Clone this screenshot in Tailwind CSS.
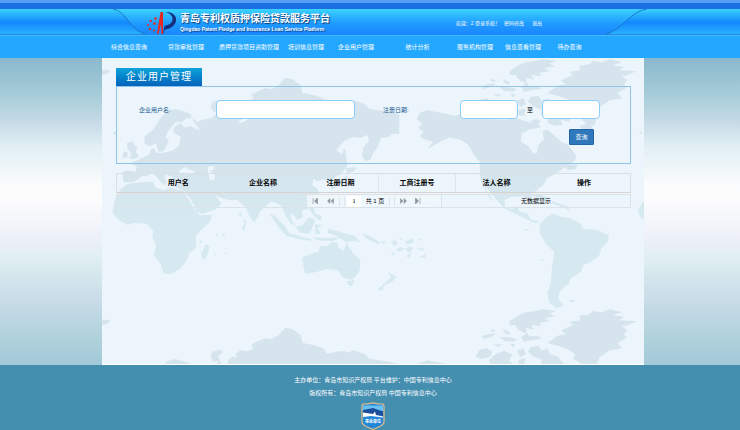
<!DOCTYPE html>
<html lang="zh-CN">
  <head>
    <title>青岛专利权质押保险贷款服务平台</title>
    <meta charset="utf-8" />
    <meta name="viewport" content="width=device-width, initial-scale=1" />
    <script src="https://cdn.jsdelivr.net/npm/@tailwindcss/browser@4"></script>
  </head>
  <body
    class="min-h-screen flex flex-col bg-[#448eb0] font-['Liberation_Sans','Noto_Sans_CJK_SC',sans-serif] text-[6px] leading-[8px]"
  >
    <!-- banner -->
    <header
      class="relative h-9 border-t-3 border-[#559ff8] bg-[#1b6fe0]"
    >
      <svg
        class="absolute inset-x-0 top-[6px] w-full h-[27px]"
        viewBox="0 0 740 27"
        preserveAspectRatio="none"
        aria-hidden="true"
      >
        <defs>
          <linearGradient id="side" x1="0" y1="0" x2="0" y2="1">
            <stop offset="0" stop-color="#3ad0fd" />
            <stop offset="0.5" stop-color="#1389fe" />
            <stop offset="1" stop-color="#2bb6ff" />
          </linearGradient>
          <linearGradient id="mid" x1="0" y1="0" x2="0" y2="1">
            <stop offset="0" stop-color="#3bd3ff" />
            <stop offset="0.55" stop-color="#1f9bff" />
            <stop offset="1" stop-color="#1a86ff" />
          </linearGradient>
        </defs>
        <rect width="740" height="27" fill="url(#side)" />
        <path
          d="M113 0C127 2 129 22 148 26H604C624 20 630 2 647 0Z"
          fill="url(#mid)"
        />
        <path
          d="M113 0C127 2 129 22 148 26M604 26C624 20 630 2 647 0"
          fill="none"
          stroke="#1669b8"
          stroke-width="0.8"
        />
        <path d="M0 25.500H148M604 25.500H740" stroke="#1f8be0" />
        <path d="M0 26.500H740" stroke="#43b7ff" />
      </svg>
      <div
        class="relative h-full pl-[146px] pr-[198px] pt-[6px] flex items-center justify-between text-white"
      >
        <a href="#" class="flex items-center gap-1">
          <svg class="w-[30px] h-6" viewBox="0 0 30 24" aria-hidden="true">
            <path d="M14.500 1L17 1 17 23 15.500 23 15 13 12.500 23 11 23Z" fill="#e8281e" />
            <path
              d="M20 1C29 1 33 8 28 14C25 18 20 18 18.500 19L18 22 17 23 18.500 15C23 14 27 12 26.500 7C26 4 23 2 20 1Z"
              fill="#14307e"
            />
            <g fill="#e8281e">
              <circle cx="9.500" cy="7.500" r="1.300" />
              <circle cx="4.500" cy="10" r="1.200" />
              <circle cx="2" cy="14" r="1" />
              <circle cx="8.500" cy="12.500" r="1.300" />
              <circle cx="4" cy="18" r="1.200" />
              <circle cx="8" cy="19.500" r="1" />
            </g>
          </svg>
          <span class="flex flex-col text-shadow-[1px_1px_1px_#0b3c78]">
            <span class="text-[10px] leading-[12px] font-bold whitespace-nowrap">青岛专利权质押保险贷款服务平台</span>
            <span class="text-[5px] leading-[8px] font-bold whitespace-nowrap">Qingdao Patent Pledge and Insurance Loan Service Platform</span>
          </span>
        </a>
        <div class="flex gap-1 text-[5px] whitespace-nowrap">
          <span>欢迎：2 登录系统！</span>
          <a href="#" class="mr-1">密码修改</a>
          <a href="#">退出</a>
        </div>
      </div>
    </header>

    <nav class="h-[22px] pl-[100px] pr-[148px] bg-[#24a8ff] text-white">
      <ul
        class="h-full grid grid-cols-[58fr_56fr_70fr_44fr_56fr_67fr_48fr_48fr_45fr] items-center text-center whitespace-nowrap"
      >
        <li><a href="#">综合信息查询</a></li>
        <li><a href="#">贷款审批管理</a></li>
        <li><a href="#">质押贷款项目资助管理</a></li>
        <li><a href="#">培训信息管理</a></li>
        <li><a href="#">企业用户管理</a></li>
        <li><a href="#">统计分析</a></li>
        <li><a href="#">服务机构管理</a></li>
        <li><a href="#">信息查看管理</a></li>
        <li><a href="#">待办查询</a></li>
      </ul>
    </nav>

    <div
      class="grow pl-[102px] pr-[96px] flex flex-col bg-[linear-gradient(#8ab8cd_0%,#a6ccd8_12%,#c6dbe7_21%,#e2eff4_29%,#fafbfc_41%,#fcfcfd_46%,#ebeff7_60%,#dfeff1_65%,#c8dce8_79%,#b0d2db_91%,#a2c9d9_100%)]"
    >
      <main class="relative grow pl-[14px] pr-[13px] pt-[10px] bg-[#ecf5fc] border-b border-white">
        <!-- world map, tiled downwards -->
        <svg
          class="absolute inset-0 w-full h-full"
          viewBox="0 0 542 307"
          preserveAspectRatio="xMidYMin slice"
          aria-hidden="true"
        >
          <defs>
            <linearGradient id="land" gradientUnits="userSpaceOnUse" x1="0" y1="0" x2="0" y2="750">
              <stop offset="0.45" stop-color="#d5e4ed" />
              <stop offset="0.65" stop-color="#d6e9f0" />
            </linearGradient>
          </defs>
          <g transform="translate(0 -1) scale(0.3457 0.3333)">
            <g id="world" fill="url(#land)">
              <!-- Europe and Asia -->
              <path
                d="M62 375L58 345 72 340 96 344 101 328 83 318 118 302 137 292 143 276 152 274 155 287 175 288 203 281 222 268 228 240 205 226 209 210 228 198 240 212 256 206 272 216 284 218 265 196 262 184 276 195 290 188 318 182 342 160 346 178 362 172 366 158 380 148 392 152 405 136 438 126 432 112 470 94 490 96 512 84 530 62 550 66 575 85 580 108 612 114 640 124 650 140 690 132 715 136 728 130 758 140 775 156 820 162 860 172 860 230 838 232 830 240 806 244 798 270 786 286 776 308 762 312 752 296 756 272 772 252 768 234 748 242 725 240 700 252 678 280 690 288 706 296 710 325 692 352 672 362 676 392 664 398 658 380 642 366 622 374 612 364 608 384 626 398 626 418 612 440 598 455 576 462 582 480 564 490 556 476 545 468 548 486 560 508 546 500 530 474 520 448 504 438 488 434 470 452 458 462 452 480 440 496 426 478 416 452 404 442 392 428 366 430 338 420 326 412 346 440 326 458 290 470 276 466 258 428 240 404 210 388 222 378 200 360 184 350 180 362 190 376 178 384 160 362 150 352 138 350 132 358 116 356 104 368 88 376Z"
              />
              <!-- Scandinavia -->
              <path
                d="M124 262L122 240 148 218 170 182 190 162 212 156 240 164 258 172 258 186 244 184 232 196 212 196 192 222 184 240 194 252 178 282 164 284 156 258 140 268Z"
              />
              <!-- Britain and Ireland -->
              <path d="M72 258L90 252 92 264 102 266 98 284 108 300 90 306 78 304 86 290 74 276Z" />
              <path d="M62 284L74 284 74 300 58 304Z" />
              <!-- Africa -->
              <path
                d="M52 398L74 380 120 376 148 374 152 390 178 400 200 392 236 402 248 424 262 448 282 474 318 474 312 496 290 516 272 538 272 572 252 590 246 610 226 636 200 650 178 650 170 622 150 594 156 564 146 540 148 522 130 500 92 498 74 504 48 488 30 466 36 432Z"
              />
              <path d="M300 562L312 566 304 600 292 608 286 590Z" />
              <path d="M280 548L290 552 286 560ZM328 532L338 528 334 538ZM346 532L358 530 352 538ZM322 592L330 590 326 596ZM352 588L364 588 358 592Z" />
              <!-- Indian Ocean islands -->
              <path d="M392 470L406 466 402 480ZM406 484L418 492 412 522 404 514 412 500Z" />
              <!-- Arctic islands -->
              <path
                d="M320 134L344 128 350 136 336 148 342 162 322 164 314 150ZM386 140L400 130 414 132 406 148 412 160 396 166ZM430 140L444 136 450 160 442 164Z"
              />
              <path d="M0 40L20 38 24 44 6 54 0 52ZM34 226L40 222 40 234 32 232Z" />
              <!-- Japan and Sakhalin -->
              <path d="M696 278L704 276 708 330 700 334ZM704 334L738 330 728 344 710 348ZM712 350L706 372 682 386 676 380 698 364Z" />
              <!-- South-east Asia -->
              <path
                d="M484 470L500 476 526 504 544 530 556 532 580 540 606 546 604 552 560 544 534 536 512 512ZM560 510L580 504 600 480 616 488 610 510 598 530 574 528ZM616 502L640 504 624 512 632 530 618 532ZM598 454L612 452 618 470 636 478 632 492 614 478ZM610 540L650 544 690 540 670 552 620 550ZM652 516L670 518 696 528 730 536 748 556 726 552 706 556 682 538 654 528ZM752 528L776 538 806 558 796 560 764 544Z"
              />
              <path
                d="M806 552L820 554 816 564ZM836 556L848 548 856 560 846 566ZM858 540L872 546 862 548ZM876 554L896 544 904 556 884 562ZM912 546L924 546 918 552ZM850 578L862 570 878 574 858 584ZM878 576L890 568 900 574 888 588ZM908 574L930 574 930 582ZM880 598L896 586 888 604ZM918 600L936 592 934 602ZM834 584L846 588 844 596Z"
              />
              <!-- Australia and New Zealand -->
              <path
                d="M578 602L596 594 626 584 632 566 652 568 664 556 682 558 684 572 700 582 706 554 716 572 728 590 748 612 744 646 724 668 698 662 682 640 650 636 618 646 588 650 584 634ZM708 672L732 670 722 688 712 684Z"
              />
              <path d="M826 642L836 652 854 658 838 676 820 682 806 702 798 696 820 676 836 662ZM804 690L818 696 804 702Z" />
              <!-- North America -->
              <path
                d="M910 188L918 168 940 160 984 168 1020 176 1046 170 1082 184 1104 178 1128 186 1166 188 1200 184 1234 196 1262 198 1268 212 1240 216 1214 230 1212 254 1234 268 1248 290 1258 288 1260 268 1278 246 1274 222 1290 218 1310 236 1330 256 1346 262 1372 296 1368 310 1352 324 1376 322 1370 336 1348 340 1340 330 1312 350 1288 362 1276 384 1254 402 1240 416 1248 438 1234 432 1218 418 1182 420 1164 430 1168 452 1188 456 1206 446 1206 462 1232 470 1240 488 1264 492 1256 500 1226 486 1196 470 1166 456 1142 430 1116 396 1104 386 1130 428 1140 440 1122 424 1100 384 1093 356 1093 314 1076 294 1060 264 1036 248 1006 242 988 248 962 264 940 276 958 254 936 248 918 238 930 224 914 212 926 200Z"
              />
              <path d="M930 430L952 436 972 448 966 454 946 444ZM1232 414L1262 410 1296 424 1286 430 1256 420ZM1300 432L1346 448 1354 464 1338 452 1304 440ZM1222 514L1236 518 1226 522ZM1268 606L1280 608 1272 612Z" />
              <!-- South America -->
              <path
                d="M1266 500L1288 480 1304 470 1330 480 1350 482 1382 498 1394 516 1430 518 1466 534 1464 552 1444 576 1438 596 1410 618 1394 622 1386 644 1356 664 1350 680 1336 690 1322 708 1320 724 1336 746 1316 754 1294 738 1288 706 1298 680 1302 632 1308 584 1284 562 1266 528ZM1350 730L1370 728 1356 738Z"
              />
              <!-- Canadian archipelago -->
              <path
                d="M1180 42L1200 28 1224 16 1252 12 1274 6 1314 12 1294 20 1310 28 1280 34 1296 42 1266 48 1270 58 1242 54 1250 68 1226 62 1228 80 1206 70 1196 54 1178 54Z"
              />
              <path
                d="M1098 88L1120 80 1140 80 1126 90 1104 96ZM1122 66L1142 70 1130 76ZM1160 66L1180 76 1176 84 1162 76ZM1150 90L1176 90 1200 96 1190 104 1164 102ZM1212 90L1230 78 1236 88 1262 86 1272 96 1240 100 1220 104ZM1080 150L1092 128 1112 124 1130 134 1122 150 1098 156ZM1118 160L1140 140 1162 132 1188 142 1178 160 1194 176 1160 184 1128 176ZM1200 130L1220 124 1226 142 1210 150ZM1204 160L1224 154 1222 176 1206 176ZM1132 112L1156 112 1146 120ZM1180 110L1196 112 1190 122Z"
              />
              <path
                d="M1240 120L1262 116 1272 130 1290 124 1296 142 1318 148 1336 170 1358 182 1350 194 1326 188 1334 204 1308 206 1288 196 1294 180 1268 172 1272 158 1246 148 1232 134ZM1240 190L1260 186 1270 196 1250 202Z"
              />
              <!-- Greenland and Iceland -->
              <path
                d="M1288 108L1318 86 1342 82 1328 70 1362 54 1352 44 1384 40 1380 26 1410 22 1420 12 1446 16 1470 6 1504 16 1478 24 1510 30 1496 40 1546 42 1514 58 1500 54 1520 70 1510 82 1518 92 1492 108 1504 124 1470 130 1440 150 1430 176 1426 204 1408 208 1390 190 1384 168 1362 156 1368 142 1346 126 1322 118Z"
              />
              <path d="M1380 208L1408 198 1420 216 1396 224ZM1552 226L1562 224 1560 232ZM1568 430L1550 460 1556 480 1568 488Z" />
              <!-- inland seas -->
              <path
                d="M222 342L240 330 252 338 270 342 264 350 228 350ZM304 330L326 326 322 338 312 342 326 352 326 368 312 370 308 348ZM392 194L420 180 430 182 404 198Z"
                fill="#ecf5fc"
              />
            </g>
            <use href="#world" y="750" />
          </g>
        </svg>

        <div class="relative">
          <h1
            class="w-[86px] h-[18px] flex items-center justify-center bg-linear-to-b from-[#10a3da] to-[#0762bb] text-[10px] tracking-widest text-white"
          >
            企业用户管理
          </h1>
          <form class="h-[78px] pt-[13px] pl-[22px] pr-[30px] border border-[#8fc5ea] text-[#1c5f95]">
            <div class="flex items-center">
              <label for="username" class="w-[77px]">企业用户名:</label>
              <input
                id="username"
                type="text"
                class="w-0 grow h-[19px] px-1 rounded-[4px] border border-[#8ccdfa] bg-white"
              />
              <label for="date-from" class="w-[77px] ml-7">注册日期:</label>
              <input
                id="date-from"
                type="text"
                class="w-[58px] h-[19px] px-1 rounded-[4px] border border-[#8ccdfa] bg-white"
              />
              <label for="date-to" class="w-6 text-center text-black">至</label>
              <input
                id="date-to"
                type="text"
                class="w-[58px] h-[19px] px-1 rounded-[4px] border border-[#8ccdfa] bg-white"
              />
            </div>
            <div class="flex justify-end pr-[6px] mt-[10px]">
              <button
                type="submit"
                class="w-[25px] h-4 rounded-[1px] border border-[#2467a8] bg-[#2e78bb] text-white"
              >
                查询
              </button>
            </div>
          </form>

          <table
            class="w-full mt-[9px] table-fixed border-collapse border border-[#d9e0e5] text-[7px] text-black"
          >
            <colgroup>
              <col class="w-[17px]" />
              <col class="w-[90px]" />
              <col class="w-[79px]" />
              <col class="w-[76px]" />
              <col class="w-[77px]" />
              <col class="w-[82px]" />
              <col />
            </colgroup>
            <thead>
              <tr class="h-[19px] border-b border-[#d8d3d3]">
                <td></td>
                <th class="border-r border-[#dde6ec]">用户名</th>
                <th class="border-r border-[#dde6ec]">企业名称</th>
                <th class="border-r border-[#dde6ec]">注册日期</th>
                <th class="border-r border-[#dde6ec]">工商注册号</th>
                <th class="border-r border-[#dde6ec]">法人名称</th>
                <th>操作</th>
              </tr>
            </thead>
          </table>
          <div
            class="mt-px h-[14px] grid grid-cols-[191fr_135px_189fr] items-center border border-[#dbe3e8] text-black"
          >
            <span></span>
            <div class="h-full flex items-center border-r border-[#d9e2e8] bg-[#f1f7fb]/80">
              <button type="button" aria-label="首页" class="w-4 flex justify-center">
                <svg class="w-[6px] h-[6px]" viewBox="0 0 6 6">
                  <path d="M1 0V6M5.500 0L2.500 3 5.500 6Z" fill="#8b959b" stroke="#8b959b" stroke-width="0.7" />
                </svg>
              </button>
              <button type="button" aria-label="上一页" class="w-[15px] flex justify-center">
                <svg class="w-[7px] h-[6px]" viewBox="0 0 7 6">
                  <path d="M3 0.500L0.500 3 3 5.500ZM6.500 0.500L4 3 6.500 5.500Z" fill="#8b959b" stroke="#8b959b" stroke-width="0.500" />
                </svg>
              </button>
              <span class="w-[6px] mx-px h-[9px] border-x border-[#dbe4ea]"></span>
              <input
                type="text"
                aria-label="页码"
                value="1"
                class="w-[14px] h-[11px] mx-px bg-white text-center font-['Liberation_Serif','Noto_Sans_CJK_SC',serif] text-[7px]"
              />
              <span class="w-[26px] text-center">共 1 页</span>
              <span class="w-[6px] mx-px h-[9px] border-x border-[#dbe4ea]"></span>
              <button type="button" aria-label="下一页" class="w-[15px] flex justify-center">
                <svg class="w-[7px] h-[6px]" viewBox="0 0 7 6">
                  <path d="M0.500 0.500L3 3 0.500 5.500ZM4 0.500L6.500 3 4 5.500Z" fill="#8b959b" stroke="#8b959b" stroke-width="0.500" />
                </svg>
              </button>
              <button type="button" aria-label="末页" class="w-[15px] flex justify-center">
                <svg class="w-[6px] h-[6px]" viewBox="0 0 6 6">
                  <path d="M5 0V6M0.500 0L3.500 3 0.500 6Z" fill="#8b959b" stroke="#8b959b" stroke-width="0.7" />
                </svg>
              </button>
            </div>
            <span class="text-center">无数据显示</span>
          </div>
        </div>
      </main>
    </div>

    <footer
      class="h-[65px] overflow-hidden pt-[11px] pl-[6px] flex flex-col items-center gap-[5px] bg-[#448eb0] text-white"
    >
      <p>主办单位：青岛市知识产权局 平台维护：中国专利信息中心</p>
      <p>版权所有：青岛市知识产权局 中国专利信息中心</p>
      <svg class="w-6 h-7 shrink-0" viewBox="0 0 24 28" role="img">
        <path
          d="M12 0.800C15 1.600 19 2 22 2C23.500 3 23 5 23 7V20C23 24 17 25 12 27.500C7 25 1 24 1 20V7C1 5 0.500 3 2 2C5 2 9 1.600 12 0.800Z"
          fill="#2387d8"
          stroke="#e8bd86"
          stroke-width="1.200"
        />
        <path d="M2 3.500H22V9L2 8Z" fill="#68c1f4" />
        <path d="M2 8L12 6 22 9.500V14L2 12Z" fill="#1a4f9c" />
        <path d="M2 10.500L12 12 14 9.500 15 13 22 14.500V15.500L10 14 2 15Z" fill="#fff" />
        <text x="12" y="21" fill="#fff" font-size="4" font-weight="bold" text-anchor="middle">事业单位</text>
      </svg>
    </footer>
  </body>
</html>
